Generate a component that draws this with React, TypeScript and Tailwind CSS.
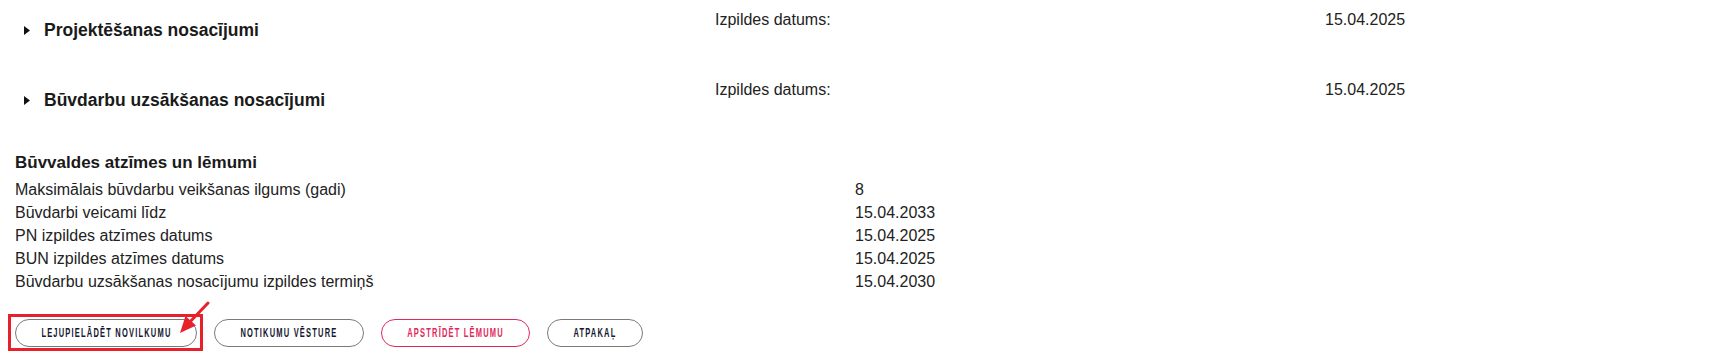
// Building permit summary: conditions, authority marks and action buttons
import React from "react"

const conditions = [
  { title: "Projektēšanas nosacījumi", label: "Izpildes datums:", date: "15.04.2025" },
  { title: "Būvdarbu uzsākšanas nosacījumi", label: "Izpildes datums:", date: "15.04.2025" },
]

const marks = [
  ["Maksimālais būvdarbu veikšanas ilgums (gadi)", "8"],
  ["Būvdarbi veicami līdz", "15.04.2033"],
  ["PN izpildes atzīmes datums", "15.04.2025"],
  ["BUN izpildes atzīmes datums", "15.04.2025"],
  ["Būvdarbu uzsākšanas nosacījumu izpildes termiņš", "15.04.2030"],
]

function Caret() {
  return (
    <svg width="6" height="9" viewBox="0 0 6 9" className="shrink-0">
      <path d="M0 0 L6 4.5 L0 9 Z" fill="#111" />
    </svg>
  )
}

// condensed caps label, squeezed horizontally since no condensed display font is installed
function Btn({ label, w, danger }: { label: string; w: string; danger?: boolean }) {
  return (
    <button
      className={`flex h-[28px] items-center justify-center overflow-hidden rounded-full border bg-white ${w} ${
        danger ? "border-[#e0285a] text-[#e0285a]" : "border-[#7a7a7a] text-[#14172f]"
      }`}
    >
      <span className="inline-block scale-x-[0.6] whitespace-nowrap text-[12.5px] font-bold uppercase leading-none tracking-[2px]">
        {label}
      </span>
    </button>
  )
}

export default function App() {
  return (
    <div className="min-h-[361px] w-[1712px] bg-white px-[15px] text-[#222] font-['Liberation_Sans',Arial,sans-serif]">
      {conditions.map((c, i) => (
        <div key={i} className="flex h-[70px] items-start pt-[11px] text-[16px] leading-[18px]">
          <div className="flex w-[700px] items-center gap-[14px] pl-[9px] pt-[9px]">
            <Caret />
            <h3 className="text-[17.5px] font-bold leading-[20px] text-[#1a1a1a]">{c.title}</h3>
          </div>
          <div className="w-[610px]">{c.label}</div>
          <div>{c.date}</div>
        </div>
      ))}

      <div className="pt-[12px]">
        <h3 className="text-[17px] font-bold leading-[22px] text-[#1a1a1a]">Būvvaldes atzīmes un lēmumi</h3>
        <div className="mt-[4px] grid grid-cols-[840px_1fr] text-[16px] leading-[23px]">
          {marks.map(([k, v]) => (
            <React.Fragment key={k}>
              <div>{k}</div>
              <div>{v}</div>
            </React.Fragment>
          ))}
        </div>
      </div>

      <div className="relative mt-[26px] flex gap-[17px]">
        <div className="absolute left-[-7px] top-[-5px] h-[37px] w-[195px] border-[3px] border-[#e8202b]" />
        <svg className="absolute left-[160px] top-[-26px]" width="40" height="45" viewBox="0 0 40 45">
          <line x1="33" y1="10" x2="15.8" y2="28" stroke="#e8202b" strokeWidth="3" strokeLinecap="round" />
          <path d="M5 40 L21 32.5 L10.5 23 Z" fill="#e8202b" />
        </svg>
        <Btn label="Lejupielādēt novilkumu" w="w-[182px]" />
        <Btn label="Notikumu vēsture" w="w-[150px]" />
        <Btn label="Apstrīdēt lēmumu" w="w-[149px]" danger />
        <Btn label="Atpakaļ" w="w-[96px]" />
      </div>
    </div>
  )
}
